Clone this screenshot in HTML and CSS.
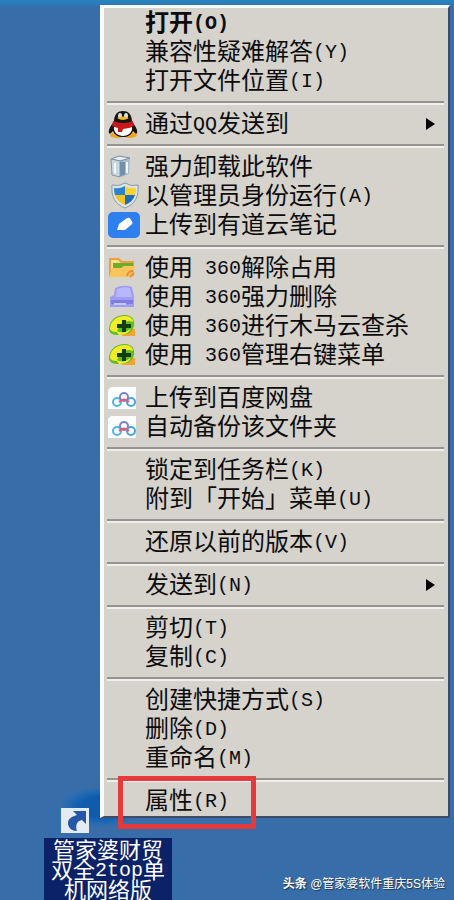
FILE: index.html
```html
<!DOCTYPE html>
<html lang="zh-CN">
  <head>
    <meta charset="utf-8">
    <title>管家婆财贸双全</title>
    <link rel="stylesheet" href="styles.css">
  </head>
  <body>
    <a href="#" class="shortcut">
      <span class="shortcut-icon">
        <svg width="28" height="25" viewBox="0 0 28 25">
          <rect width="28" height="25" fill="#e4ebf2"/>
          <path d="M12 3h13v13l-4-4c-5 1-7 5-5 11-5 0-9-3-9-8 0-4 3-6 9-8z" fill="#2457a5"/>
        </svg>
      </span>
      <span class="shortcut-name">管家婆财贸<br>双全<span class="latin">2top</span>单<br>机网络版</span>
    </a>

    <div class="menu">
      <div class="group">
        <button class="item default"><span class="icon"></span><span class="label">打开<span class="latin">(O)</span></span></button>
        <button class="item"><span class="icon"></span><span class="label">兼容性疑难解答<span class="latin">(Y)</span></span></button>
        <button class="item"><span class="icon"></span><span class="label">打开文件位置<span class="latin">(I)</span></span></button>
      </div>
      <div class="group">
        <button class="item">
          <span class="icon">
            <svg width="30" height="28" viewBox="0 0 30 28">
              <ellipse cx="9" cy="25" rx="7" ry="3" fill="#f2a51d"/>
              <ellipse cx="22" cy="25" rx="7" ry="3" fill="#f2a51d"/>
              <path d="M6 12C6 4 10 1 15 1s9 3 9 11c3 3 6 8 5 11-1 2-3-1-4-2-2 4-5 6-10 6s-8-2-10-6c-1 1-3 4-4 2-1-3 2-8 5-11z" fill="#151313"/>
              <path d="M6 17h18c1 5-4 9-9 9s-10-4-9-9z" fill="#fff"/>
              <ellipse cx="12" cy="6" rx="2" ry="3" fill="#ddd"/>
              <ellipse cx="18" cy="6" rx="2" ry="3" fill="#ddd"/>
              <path d="M9 8q6-3 12 0-6 4-12 0z" fill="#f5b51a"/>
              <path d="M5 11q10 4 20 0l1 5q-5 3-11 3l-1 3h-4v-4q-4-1-6-2z" fill="#c9181c"/>
            </svg>
          </span>
          <span class="label">通过<span class="latin">QQ</span>发送到</span>
          <svg class="arrow" width="9" height="12" viewBox="0 0 9 12"><path d="M0 0l9 6-9 6z"/></svg>
        </button>
      </div>
      <div class="group">
        <button class="item">
          <span class="icon">
            <svg class="inset" width="24" height="24" viewBox="2 0 24 24">
              <path d="M3 4l8-3 11 2-1 16-8 3-9-2z" fill="#a9bdcc"/>
              <path d="M3 4l9 2 10-3-11-2z" fill="#e3edf3" stroke="#7890a5"/>
              <path d="M12 6v16l-8-2L3 4z" fill="#cbd8e1" stroke="#8297a8"/>
              <path d="M12 7h5v13l-5 1z" fill="#7390aa"/>
              <path d="M7 8v10M19 7v11" stroke="#f1f6f8" stroke-width="2"/>
            </svg>
          </span>
          <span class="label">强力卸载此软件</span>
        </button>
        <button class="item">
          <span class="icon">
            <svg class="inset" width="30" height="27" viewBox="0 0 30 27">
              <path d="M15 1q6 4 13 2c1 12-3 19-13 23C5 22 1 15 2 3q7 2 13-2z" fill="#dce4e7" stroke="#879baa"/>
              <path d="M15 4v9H5q-1-3-1-7 6 1 11-2z" fill="#2a83cf"/>
              <path d="M15 4v9h10q1-3 1-7-6 1-11-2z" fill="#f6d331"/>
              <path d="M5 13h10v10q-8-3-10-10z" fill="#f3c322"/>
              <path d="M25 13H15v10q8-3 10-10z" fill="#2169bc"/>
            </svg>
          </span>
          <span class="label">以管理员身份运行<span class="latin">(A)</span></span>
        </button>
        <button class="item">
          <span class="icon">
            <svg width="32" height="26" viewBox="0 0 32 26">
              <rect width="32" height="26" rx="5" fill="#2f80ef"/>
              <path d="M9 18l2-6 8-6q3-1 4 2 3 3 0 5l-6 5z" fill="#fff"/>
            </svg>
          </span>
          <span class="label">上传到有道云笔记</span>
        </button>
      </div>
      <div class="group">
        <button class="item">
          <span class="icon">
            <svg width="28" height="23" viewBox="0 0 28 23">
              <path d="M1 2h10l3 3h12v15H1z" fill="#ef9f3e"/>
              <path d="M3 4h7l3 3h12v11H3z" fill="#fbe08b"/>
              <path d="M5 7h20v5H5z" fill="#6cae2a"/>
              <path d="M1 21l3-9h9l3-2h11l-3 11z" fill="#fac65b"/>
              <path d="M19 20q1-5 6-5M22 21l4-4" fill="none" stroke="#ec8d35" stroke-width="2"/>
            </svg>
          </span>
          <span class="label">使用<span class="latin">&nbsp;360</span>解除占用</span>
        </button>
        <button class="item">
          <span class="icon">
            <svg width="28" height="23" viewBox="0 0 28 23">
              <path d="M2 12q2-1 4-2l1-7q8-4 17-1l2 9v11H2z" fill="#9f9df2"/>
              <path d="M9 4q7-3 13-1l2 9H8z" fill="#b9b7fb"/>
              <path d="M3 15h22v4H3z" fill="#7f7ce4"/>
              <path d="M6 19h12" stroke="#c7c5ff" stroke-width="2"/>
            </svg>
          </span>
          <span class="label">使用<span class="latin">&nbsp;360</span>强力删除</span>
        </button>
        <button class="item">
          <span class="icon">
            <svg width="28" height="23" viewBox="0 0 28 23">
              <path d="M14 15h13v7H14z" fill="#f0a632"/>
              <path d="M1 16C1 6 8 1 17 1c7 0 10 5 9 11-2 7-8 9-15 9-6 0-9-1-10-5z" fill="#62bd22"/>
              <path d="M2 14C3 6 9 2 17 2c5 0 8 3 8 6-8-3-14 2-16 10-4 0-7-1-7-4z" fill="#f2ed27"/>
              <path d="M8 17q9 4 15-3-2 7-12 7z" fill="#f4ed3b"/>
              <path d="M14 6h4v4h5v4h-5v4h-4v-4H9v-4h5z" fill="#123f12"/>
            </svg>
          </span>
          <span class="label">使用<span class="latin">&nbsp;360</span>进行木马云查杀</span>
        </button>
        <button class="item">
          <span class="icon">
            <svg width="28" height="23" viewBox="0 0 28 23">
              <path d="M14 15h13v7H14z" fill="#f0a632"/>
              <path d="M1 16C1 6 8 1 17 1c7 0 10 5 9 11-2 7-8 9-15 9-6 0-9-1-10-5z" fill="#62bd22"/>
              <path d="M2 14C3 6 9 2 17 2c5 0 8 3 8 6-8-3-14 2-16 10-4 0-7-1-7-4z" fill="#f2ed27"/>
              <path d="M8 17q9 4 15-3-2 7-12 7z" fill="#f4ed3b"/>
              <path d="M14 6h4v4h5v4h-5v4h-4v-4H9v-4h5z" fill="#123f12"/>
            </svg>
          </span>
          <span class="label">使用<span class="latin">&nbsp;360</span>管理右键菜单</span>
        </button>
      </div>
      <div class="group">
        <button class="item">
          <span class="icon">
            <svg width="28" height="22" viewBox="0 0 28 22">
              <path d="M3 0h25v22H0V3z" fill="#fbfdfe"/>
              <g fill="none" stroke-width="2">
                <circle cx="9" cy="15" r="4" stroke="#49b8e9"/>
                <circle cx="23" cy="15" r="4" stroke="#45a5e3"/>
                <circle cx="16" cy="10" r="4" stroke="#7a82cf"/>
                <path d="M11 15q5-5 10 0" stroke="#e65777"/>
              </g>
            </svg>
          </span>
          <span class="label">上传到百度网盘</span>
        </button>
        <button class="item">
          <span class="icon">
            <svg width="28" height="22" viewBox="0 0 28 22">
              <path d="M3 0h25v22H0V3z" fill="#fbfdfe"/>
              <g fill="none" stroke-width="2">
                <circle cx="9" cy="15" r="4" stroke="#49b8e9"/>
                <circle cx="23" cy="15" r="4" stroke="#45a5e3"/>
                <circle cx="16" cy="10" r="4" stroke="#7a82cf"/>
                <path d="M11 15q5-5 10 0" stroke="#e65777"/>
              </g>
            </svg>
          </span>
          <span class="label">自动备份该文件夹</span>
        </button>
      </div>
      <div class="group">
        <button class="item"><span class="icon"></span><span class="label">锁定到任务栏<span class="latin">(K)</span></span></button>
        <button class="item"><span class="icon"></span><span class="label">附到「开始」菜单<span class="latin">(U)</span></span></button>
      </div>
      <div class="group">
        <button class="item"><span class="icon"></span><span class="label">还原以前的版本<span class="latin">(V)</span></span></button>
      </div>
      <div class="group">
        <button class="item">
          <span class="icon"></span>
          <span class="label">发送到<span class="latin">(N)</span></span>
          <svg class="arrow" width="9" height="12" viewBox="0 0 9 12"><path d="M0 0l9 6-9 6z"/></svg>
        </button>
      </div>
      <div class="group">
        <button class="item"><span class="icon"></span><span class="label">剪切<span class="latin">(T)</span></span></button>
        <button class="item"><span class="icon"></span><span class="label">复制<span class="latin">(C)</span></span></button>
      </div>
      <div class="group">
        <button class="item"><span class="icon"></span><span class="label">创建快捷方式<span class="latin">(S)</span></span></button>
        <button class="item"><span class="icon"></span><span class="label">删除<span class="latin">(D)</span></span></button>
        <button class="item"><span class="icon"></span><span class="label">重命名<span class="latin">(M)</span></span></button>
      </div>
      <div class="group marked">
        <button class="item"><span class="icon"></span><span class="label">属性<span class="latin">(R)</span></span></button>
      </div>
    </div>

    <div class="credit"><b>头条</b> @管家婆软件重庆5S体验</div>
  </body>
</html>
```

FILE: styles.css
```css
* {
  box-sizing: border-box;
}
body {
  position: relative;
  min-height: 100vh;
  margin: 0;
  padding: 5px 4px 0 100px;
  background: linear-gradient(#2585c4, #376da9 8px);
  font-family: "Liberation Sans", "Noto Sans CJK SC", sans-serif;
}
.menu {
  position: relative;
  border: 3px solid #fafafa;
  border-left-width: 4px;
  border-right: 2px solid #3f4c63;
  border-bottom: 2px solid #3f4c63;
  background: #d6d3cd;
  padding: 0 4px 1px 3px;
}
.group + .group {
  margin-top: 6px;
  border-top: 2px solid #96948f;
  box-shadow: inset 0 2px #f1efeb;
  padding-top: 6px;
}
.item {
  display: flex;
  align-items: center;
  width: 100%;
  height: 29px;
  padding: 0 9px 0 1px;
  border: none;
  background: none;
  color: #0c0c0c;
  font-family: "Noto Sans CJK SC", sans-serif;
  font-size: 24px;
  line-height: 24px;
  text-align: left;
  white-space: nowrap;
}
.default {
  font-weight: bold;
}
.icon {
  display: flex;
  flex: none;
  width: 37px;
}
.inset {
  margin-left: 2px;
}
.label {
  padding-bottom: 3px;
}
.latin {
  font-family: "Liberation Mono", monospace;
  font-size: 20px;
  line-height: 0;
  vertical-align: 2px;
}
.arrow {
  margin-left: auto;
}

/* Red frame round the last entry */
.marked {
  position: relative;
}
.marked::after {
  content: "";
  position: absolute;
  top: -4px;
  left: 11px;
  width: 138px;
  height: 53px;
  box-sizing: border-box;
  border: 5px solid #e53a3b;
  pointer-events: none;
}

.shortcut {
  position: absolute;
  left: 44px;
  bottom: 0;
  width: 128px;
  color: #fff;
  text-decoration: none;
}
.shortcut-icon {
  display: flex;
  align-items: flex-end;
  width: 72px;
  height: 46px;
  margin: 0 0 5px 17px;
  background: radial-gradient(ellipse 40px 20px at 40px 20px, #0f5cae 50%, #2a6db2 90%, transparent);
}
.shortcut-name {
  display: block;
  padding-bottom: 2px;
  background: #0b2268;
  font-family: "Noto Sans CJK SC", sans-serif;
  font-size: 22px;
  line-height: 20px;
  text-align: center;
  white-space: nowrap;
}
.credit {
  position: absolute;
  right: 9px;
  bottom: 7px;
  color: #fff;
  font-size: 12px;
  line-height: 18px;
  text-shadow: 1px 1px 1px #234;
}
```
